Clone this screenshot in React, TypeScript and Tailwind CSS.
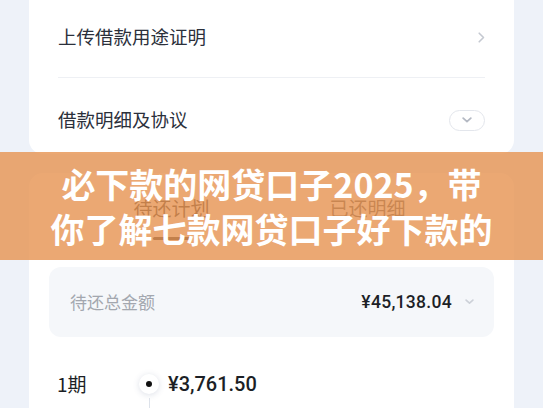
import React from 'react'

const cjk = "font-['Noto_Sans_CJK_SC',sans-serif]"
const num = "font-['Roboto','Noto_Sans_CJK_SC',sans-serif]"

const ChevronRight = () => (
  <svg width="7" height="11" viewBox="0 0 7 11" fill="none">
    <path d="M1.2 1.2L5.5 5.5L1.2 9.8" stroke="#c5c9d1" strokeWidth="1.6" strokeLinecap="round" strokeLinejoin="round" />
  </svg>
)

const ChevronDown = ({ color, w = 10 }: { color: string; w?: number }) => (
  <svg width={w} height={w * 0.6} viewBox="0 0 10 6" fill="none">
    <path d="M1.2 1.2L5 4.6L8.8 1.2" stroke={color} strokeWidth="1.8" strokeLinecap="round" strokeLinejoin="round" />
  </svg>
)

export default function App() {
  return (
    <div className={`relative h-[408px] w-[543px] overflow-hidden bg-[#eef2f9] ${cjk}`}>
      {/* 顶部卡片 */}
      <div className="mx-[29px] w-[485px] rounded-b-[14px] bg-white px-[29px]">
        <div className="flex h-[77px] items-center justify-between pb-[3px]">
          <span className="text-[18.5px] text-[#2b303b]">上传借款用途证明</span>
          <ChevronRight />
        </div>
        <div className="h-px bg-[#eef0f4]" />
        <div className="flex h-[76px] items-center justify-between pt-[8px]">
          <span className="text-[18.5px] text-[#2b303b]">借款明细及协议</span>
          <div className="flex h-[21px] w-[36px] items-center justify-center rounded-full border border-[#e3e6ec]">
            <ChevronDown color="#b4b9c3" />
          </div>
        </div>
      </div>

      {/* 还款卡片 */}
      <div className="mx-[29px] mt-[19px] w-[485px] rounded-t-[14px] bg-white px-[20px] pt-[24px]">
        <div className="flex justify-center pr-[4px]">
          <div className="flex w-[196px] flex-col items-center">
            <span className="text-[19px] leading-[22px] text-[#333]">待还计划</span>
            <div className="mt-[18px] h-[3px] w-[38px] rounded-full bg-[#333]" />
          </div>
          <div className="flex w-[196px] flex-col items-center">
            <span className="text-[19px] leading-[22px] text-[#555]">已还明细</span>
          </div>
        </div>

        <div className="mt-[27px] flex h-[70px] items-center justify-between rounded-[12px] bg-[#f5f7fa] pl-[21px] pr-[20px]">
          <span className="text-[17px] text-[#a3a7af]">待还总金额</span>
          <div className="flex items-center gap-[13px]">
            <span className={`${num} text-[17.5px] font-medium tracking-[0.3px] text-[#1c1f26]`}>¥45,138.04</span>
            <ChevronDown color="#cdd1d8" w={9} />
          </div>
        </div>

        <div className="mt-[33px] grid grid-cols-[82px_20px_1fr] pl-[8px]">
          <span className="text-[19px] leading-[28px] text-[#1c1f26]">1期</span>
          <div className="flex items-center justify-center">
            <div className="flex h-[20px] w-[20px] items-center justify-center rounded-full bg-white shadow-[0_1px_6px_rgba(60,80,120,0.18)]">
              <div className="h-[6px] w-[6px] rounded-full bg-[#111]" />
            </div>
          </div>
          <span className={`${num} pl-[9px] text-[20px] font-medium leading-[28px] text-[#1c1f26]`}>¥3,761.50</span>

          <span className="pt-[15px] text-[13px] text-[#b3b7be]">2024/04/22</span>
          <div className="flex justify-center">
            <div className="h-[40px] w-px bg-[#dde2ea]" />
          </div>
          <div className="flex gap-[40px] pl-[9px] pt-[15px] text-[13px] text-[#b3b7be]">
            <span>本金 ¥3,545.36</span>
            <span>利息 ¥216.14</span>
          </div>
        </div>
      </div>

      {/* 标题横幅 */}
      <div className="absolute left-0 right-0 top-[152px] flex h-[108px] flex-col items-center justify-center bg-[rgba(230,146,80,0.8)] text-[34px] font-bold leading-[45px] text-white">
        <span>必下款的网贷口子2025，带</span>
        <span>你了解七款网贷口子好下款的</span>
      </div>
    </div>
  )
}
